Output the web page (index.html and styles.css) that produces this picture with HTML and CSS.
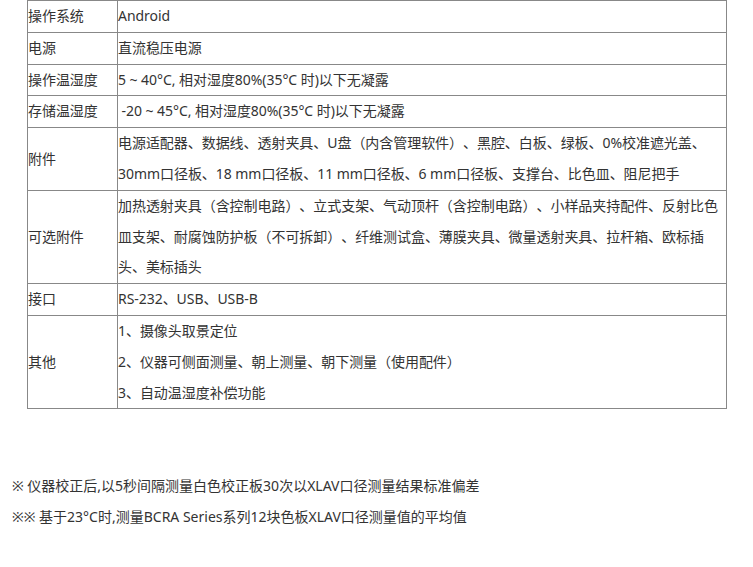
FILE: index.html
```html
<!DOCTYPE html>
<html lang="zh-CN">
<head>
<meta charset="utf-8">
<link rel="stylesheet" href="styles.css">
</head>
<body>
<table class="spec">
  <colgroup><col class="c1"><col class="c2"></colgroup>
  <tr><td>操作系统</td><td>Android</td></tr>
  <tr><td>电源</td><td>直流稳压电源</td></tr>
  <tr><td>操作温湿度</td><td>5 ~ 40°C, 相对湿度80%(35°C 时)以下无凝露</td></tr>
  <tr><td>存储温湿度</td><td>&nbsp;-20 ~ 45°C, 相对湿度80%(35°C 时)以下无凝露</td></tr>
  <tr><td>附件</td><td>电源适配器、数据线、透射夹具、U盘（内含管理软件）、黑腔、白板、绿板、0%校准遮光盖、<br>30mm口径板、18 mm口径板、11 mm口径板、6 mm口径板、支撑台、比色皿、阻尼把手</td></tr>
  <tr><td>可选附件</td><td>加热透射夹具（含控制电路）、立式支架、气动顶杆（含控制电路）、小样品夹持配件、反射比色<br>皿支架、耐腐蚀防护板（不可拆卸）、纤维测试盒、薄膜夹具、微量透射夹具、拉杆箱、欧标插<br>头、美标插头</td></tr>
  <tr><td>接口</td><td>RS-232、USB、USB-B</td></tr>
  <tr><td>其他</td><td>1、摄像头取景定位<br>2、仪器可侧面测量、朝上测量、朝下测量（使用配件）<br>3、自动温湿度补偿功能</td></tr>
</table>
<div class="notes">
  <p>※ 仪器校正后,以5秒间隔测量白色校正板30次以XLAV口径测量结果标准偏差</p>
  <p>※※ 基于23°C时,测量BCRA Series系列12块色板XLAV口径测量值的平均值</p>
</div>
</body>
</html>
```
FILE: styles.css
```css
html, body {
  margin: 0;
  padding: 0;
  background: #fff;
}
body {
  font-family: "Noto Sans", "Noto Sans CJK SC", sans-serif;
  font-size: 14px;
  color: #333;
  line-height: 30.8px;
  text-spacing-trim: space-all;
}
.spec {
  border-collapse: collapse;
  margin-left: 27px;
  width: 700px;
  table-layout: fixed;
}
.c1 { width: 90px; }
.spec td {
  border: 1px solid #888;
  padding: 0;
  vertical-align: middle;
  white-space: nowrap;
  letter-spacing: -0.05px;
}
.notes {
  margin-top: 62px;
  padding-left: 12px;
}
.notes p {
  margin: 0;
}
```
